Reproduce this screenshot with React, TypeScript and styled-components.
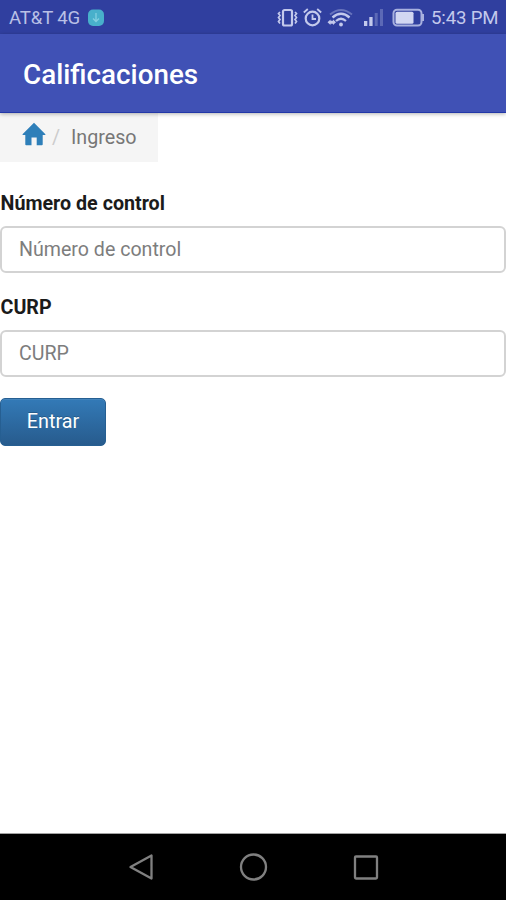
import React from "react";
import styled, { createGlobalStyle } from "styled-components";

const GlobalStyle = createGlobalStyle`
  *, *::before, *::after { box-sizing: border-box; }
  body { margin: 0; background: #fff; font-family: Roboto, "Liberation Sans", sans-serif; }
`;

const Screen = styled.div`
  display: flex;
  flex-direction: column;
  height: 900px;
  width: 506px;
  overflow: hidden;
  background: #fff;
`;

const StatusBar = styled.div`
  display: flex;
  align-items: center;
  flex: 0 0 34px;
  height: 34px;
  padding: 2px 8px 0 9px;
  background: #303f9f;
  color: #b9c0e6;
  font-size: 18.6px;
  line-height: 34px;
  white-space: nowrap;
`;

const Carrier = styled.span`
  width: 78px;
  letter-spacing: -0.15px;
`;

const StatusIcons = styled.div`
  display: flex;
  align-items: center;
  margin-left: auto;
  color: #c3c9ec;
`;

const StatusIcon = styled.svg<{ $gap: number }>`
  display: block;
  flex: none;
  margin-right: ${({ $gap }) => $gap}px;
`;

const Clock = styled.span`
  width: 67px;
  color: #c3c9ec;
  letter-spacing: -0.15px;
`;

const AppBar = styled.header`
  position: relative;
  display: flex;
  align-items: center;
  flex: 0 0 79px;
  padding: 3px 23px 0;
  background: #4051b5;
  border-bottom: 1px solid #2338a8;
  box-shadow: 0 1px 4px rgba(0, 0, 0, 0.3);
`;

const Title = styled.h1`
  margin: 0;
  color: #fff;
  font-size: 27.8px;
  font-weight: 500;
  line-height: 32px;
`;

const Content = styled.main`
  display: flex;
  flex-direction: column;
  align-items: flex-start;
  flex: 1;
`;

const Breadcrumb = styled.nav`
  display: flex;
  align-items: center;
  width: 158px;
  height: 49px;
  padding-left: 22px;
  background: #f5f5f5;
  color: #777;
  font-size: 19.7px;
`;

const HomeIcon = styled.svg`
  display: block;
  margin-top: -7px;
`;

const Separator = styled.span`
  width: 25px;
  padding-left: 6px;
  color: #ccc;
`;

const Field = styled.div<{ $top: number }>`
  width: 100%;
  margin-top: ${({ $top }) => $top}px;
`;

const Label = styled.label`
  display: block;
  height: 35px;
  padding: 1px 0 0 0.5px;
  color: #1b1b1b;
  font-size: 19.7px;
  font-weight: 700;
  line-height: 24px;
`;

const Input = styled.input`
  display: block;
  width: 100%;
  height: 47px;
  padding: 0 17px 1px;
  border: 2px solid #d3d3d3;
  border-radius: 6px;
  background: #fff;
  font-family: inherit;
  font-size: 19.6px;
  outline: none;
  &::placeholder { color: #7d7d7d; opacity: 1; }
`;

const Button = styled.button`
  width: 106px;
  height: 48px;
  margin-top: 21px;
  padding: 0 0 1px;
  border: 1px solid #265f92;
  border-radius: 5px;
  background: linear-gradient(#337ab7, #275b8d);
  box-shadow: inset 0 1px 0 rgba(255, 255, 255, 0.08);
  color: #fff;
  font-family: inherit;
  font-size: 19.8px;
  text-shadow: 0 -1px 0 rgba(0, 0, 0, 0.2);
`;

const SystemNav = styled.footer`
  display: grid;
  grid-template-columns: repeat(3, 112px);
  justify-content: center;
  justify-items: center;
  align-items: center;
  flex: 0 0 67px;
  padding-bottom: 1px;
  border-top: 1px solid #a2a2a2;
  background: #000;
`;

const NavIcon = styled.svg`
  display: block;
  fill: none;
  stroke: #808080;
  stroke-width: 2.3;
  stroke-linejoin: round;
`;

export default function App() {
  return (
    <Screen>
      <GlobalStyle />
      <StatusBar>
        <Carrier>AT&amp;T 4G</Carrier>
        <StatusIcon $gap={0} width="18" height="18" viewBox="0 0 18 18">
          <rect x="1" y="0.5" width="16" height="16.5" rx="5" fill="#48b0cb" />
          <path d="M9 4v8M6 9.500l3 3 3-3" fill="none" stroke="#82cfe0" strokeWidth="1.3" />
        </StatusIcon>
        <StatusIcons>
          <StatusIcon $gap={4} width="21" height="20" viewBox="0 0 21 20" fill="none" stroke="currentColor">
            <rect x="6" y="2" width="9" height="15.500" rx="1.5" strokeWidth="2.2" />
            <path d="M3 4l-1.500 1.500 1.500 2-1.500 2 1.500 2-1.500 2 1.500 2M18 4l1.500 1.500-1.500 2 1.500 2-1.500 2 1.500 2-1.500 2" strokeWidth="1.700" />
          </StatusIcon>
          <StatusIcon $gap={5} width="20" height="20" viewBox="0 0 20 20" fill="none" stroke="currentColor">
            <circle cx="10.500" cy="10.500" r="6.800" strokeWidth="2.2" />
            <path d="M10.500 6.500v4.500h3.500M1.800 4.500l4-3.500M19.200 4.500l-4-3.500" strokeWidth="1.800" />
          </StatusIcon>
          <StatusIcon $gap={9} width="27" height="20" viewBox="0 0 27 20" fill="none" stroke="currentColor">
            <path d="M3 6.500Q14 -2.500 25 6.500" strokeWidth="1.800" opacity="0.38" />
            <path d="M5.500 9.500Q14 2 22.500 9.500" strokeWidth="2.400" />
            <path d="M9 13Q14 8.500 19 13" strokeWidth="2.200" />
            <circle cx="14" cy="16.500" r="1.900" fill="currentColor" stroke="none" />
            <path d="M0.500 14.300l3-2.800v1.300h2.500v-1.300l3 2.800L6 17.100v-1.300H3.500v1.300z" fill="currentColor" stroke="none" />
          </StatusIcon>
          <StatusIcon $gap={7} width="22" height="20" viewBox="0 0 22 20" fill="currentColor">
            <rect x="1" y="13" width="3.300" height="5" />
            <rect x="6.300" y="9" width="3.300" height="9" />
            <rect x="11.700" y="5" width="3" height="13" opacity="0.3" />
            <rect x="17" y="1" width="3" height="17" opacity="0.3" />
          </StatusIcon>
          <StatusIcon $gap={6} width="33" height="20" viewBox="0 0 33 20">
            <rect x="1.500" y="1.800" width="28" height="15.700" rx="3.500" fill="none" stroke="#a8b1df" strokeWidth="2" />
            <rect x="3.500" y="3.700" width="18" height="12" rx="1.500" fill="#d2d7f2" />
            <path d="M31 6v7" stroke="#a8b1df" strokeWidth="2" />
          </StatusIcon>
          <Clock>5:43 PM</Clock>
        </StatusIcons>
      </StatusBar>
      <AppBar>
        <Title>Calificaciones</Title>
      </AppBar>
      <Content>
        <Breadcrumb>
          <HomeIcon width="24" height="24" viewBox="0 0 24 24" fill="#2e7fb9">
            <path d="M12 0.700L0.500 12.300Q0.300 13 1 13H3.300V22.500Q3.300 23.300 4.200 23.300H9.500V15.500H14.700V23.300H19.800Q20.700 23.300 20.700 22.500V13H23Q23.700 13 23.400 12.300Z" />
          </HomeIcon>
          <Separator>/</Separator>
          <span>Ingreso</span>
        </Breadcrumb>
        <Field $top={29}>
          <Label htmlFor="control">Número de control</Label>
          <Input id="control" placeholder="Número de control" />
        </Field>
        <Field $top={22}>
          <Label htmlFor="curp">CURP</Label>
          <Input id="curp" placeholder="CURP" />
        </Field>
        <Button type="button">Entrar</Button>
      </Content>
      <SystemNav>
        <NavIcon width="28" height="28" viewBox="0 0 28 28">
          <path d="M3.500 14L24.500 2.500V25.500Z" />
        </NavIcon>
        <NavIcon width="30" height="30" viewBox="0 0 30 30">
          <circle cx="15.500" cy="15" r="12.500" />
        </NavIcon>
        <NavIcon width="28" height="28" viewBox="0 0 28 28">
          <rect x="4" y="3.500" width="22" height="22" rx="1" />
        </NavIcon>
      </SystemNav>
    </Screen>
  );
}
